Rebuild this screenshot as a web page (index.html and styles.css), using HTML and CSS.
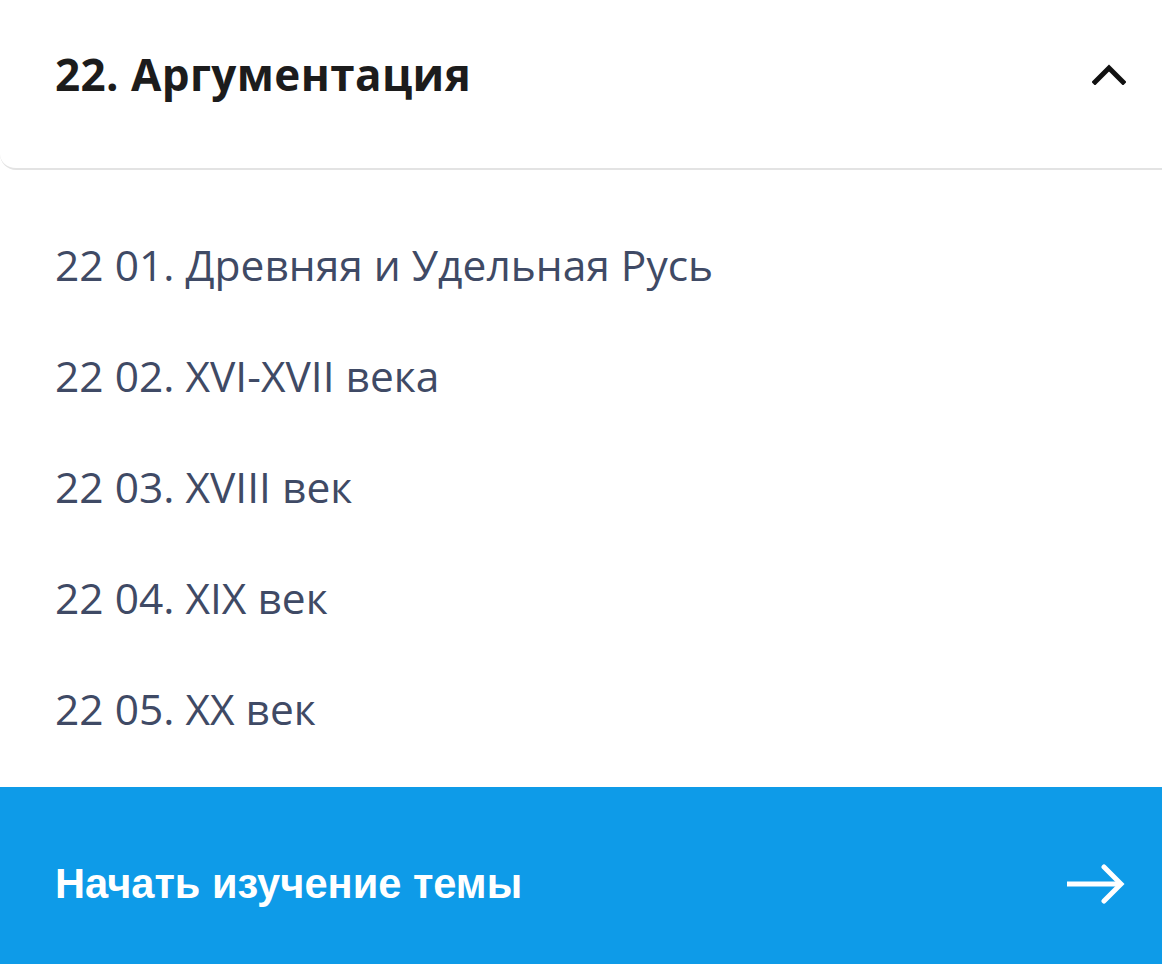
FILE: index.html
```html
<!DOCTYPE html>
<html lang="ru">
<head>
  <meta charset="utf-8">
  <meta name="viewport" content="width=device-width">
  <link rel="stylesheet" href="styles.css">
  <title>Аргументация</title>
</head>
<body>
  <div class="topic">
    <div class="topic-head">
      <span class="topic-title">22. Аргументация</span>
      <svg class="chevron" width="34" height="22" viewBox="0 0 34 22">
        <polyline points="3,19 17,5 31,19" fill="none" stroke="#111" stroke-width="5" stroke-linecap="square"/>
      </svg>
    </div>
    <ul class="subtopics">
      <li>22 01. Древняя и Удельная Русь</li>
      <li>22 02. XVI-XVII века</li>
      <li>22 03. XVIII век</li>
      <li>22 04. XIX век</li>
      <li>22 05. XX век</li>
    </ul>
    <div class="start-btn">
      <span>Начать изучение темы</span>
      <svg class="arrow" width="60" height="40" viewBox="0 0 60 40">
        <line x1="1" y1="20" x2="55" y2="20" stroke="#fff" stroke-width="5"/>
        <polyline points="38,3 55,20 38,37" fill="none" stroke="#fff" stroke-width="5" stroke-linecap="round"/>
      </svg>
    </div>
  </div>
</body>
</html>
```

FILE: styles.css
```css
html, body {
  margin: 0;
  padding: 0;
  background: #fff;
}
.topic {
  width: 1162px;
  height: 964px;
  overflow: hidden;
}
.topic-head {
  display: flex;
  align-items: center;
  justify-content: space-between;
  height: 148px;
  padding: 0 36px 20px 55px;
  border-bottom: 2px solid #e3e3e3;
  border-bottom-left-radius: 16px;
}
.topic-title {
  font-family: "Open Sans", sans-serif;
  font-weight: 700;
  font-size: 44px;
  letter-spacing: 0.4px;
  color: #1c1c1c;
}
.chevron { display: block; }
.subtopics {
  list-style: none;
  margin: 0;
  padding: 39px 0 23px 55px;
}
.subtopics li {
  height: 111px;
  line-height: 111px;
  font-family: "Open Sans", sans-serif;
  font-weight: 500;
  font-size: 42.5px;
  color: #3f4a65;
}
.start-btn {
  display: flex;
  align-items: center;
  justify-content: space-between;
  height: 161px;
  padding: 16px 36px 0 55px;
  background: #0e9be8;
}
.start-btn span {
  font-family: "Liberation Sans", Arial, sans-serif;
  font-weight: 700;
  font-size: 41.6px;
  color: #fff;
}
.arrow { display: block; }
```
